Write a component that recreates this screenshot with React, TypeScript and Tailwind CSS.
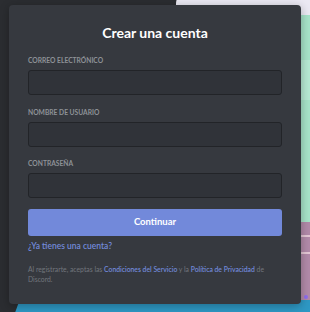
import React from "react";

function Field({ label }: { label: string }) {
  return (
    <div className="flex flex-col">
      <div className="text-[6.7px] font-bold uppercase leading-[9px] text-[#8e9297] mb-[5px]">
        {label}
      </div>
      <div className="h-[25px] rounded-[3px] bg-[#303339] border border-[#222428]" />
    </div>
  );
}

export default function App() {
  return (
    <div
      className="relative w-[310px] h-[312px] overflow-hidden bg-[#2b2d31]"
      style={{ fontFamily: "Lato, 'Open Sans', 'Noto Sans', sans-serif" }}
    >
      {/* background illustration */}
      <div className="absolute left-[176px] top-[-10px] w-[160px] h-[30px] rounded-tl-[14px] bg-[#ebe9f3]" />
      <div className="absolute left-[295px] top-[15px] w-[20px] h-[210px] bg-[#a7e3c9]" />
      <div className="absolute left-[295px] top-[60px] w-[20px] h-[40px] bg-[#b6ead3]" />
      <div className="absolute left-[295px] top-[222px] w-[20px] h-[82px] bg-[#b28aa9]" />
      <div className="absolute left-[295px] top-[235px] w-[20px] h-[2px] bg-[#e4c7d5]" />
      <div className="absolute left-[295px] top-[252px] w-[20px] h-[2px] bg-[#e4c7d5]" />
      <div className="absolute left-[304px] top-[295px] w-[4px] h-[4px] rounded-full bg-[#8f6df0]" />
      <div className="absolute left-[16px] top-[300px] w-[300px] h-[20px] bg-[#2e98c4] skew-x-[-20deg]" />

      <div className="relative pt-[5px] pl-[9px]">
        <div className="w-[292px] h-[299px] rounded-[4px] bg-[#36393f] shadow-[0_2px_10px_rgba(0,0,0,0.3)] px-[19px] pt-[19px] flex flex-col">
          <div className="text-center text-white text-[14px] font-bold leading-[18px] mb-[14px]">
            Crear una cuenta
          </div>
          <div className="flex flex-col gap-[12.5px]">
            <Field label="Correo electrónico" />
            <Field label="Nombre de usuario" />
            <Field label="Contraseña" />
          </div>
          <div className="mt-[11px] h-[27px] rounded-[3px] bg-[#7289da] flex items-center justify-center text-white text-[9.5px] font-bold">
            Continuar
          </div>
          <div className="mt-[4px] text-[8.5px] leading-[12px] font-semibold text-[#7289da]">
            ¿Ya tienes una cuenta?
          </div>
          <div className="mt-[12px] text-[6.8px] leading-[10px] text-[#72767d]">
            Al registrarte, aceptas las{" "}
            <span className="text-[#7289da] font-semibold">Condiciones del Servicio</span> y la{" "}
            <span className="text-[#7289da] font-semibold">Política de Privacidad</span> de Discord.
          </div>
        </div>
      </div>
    </div>
  );
}
